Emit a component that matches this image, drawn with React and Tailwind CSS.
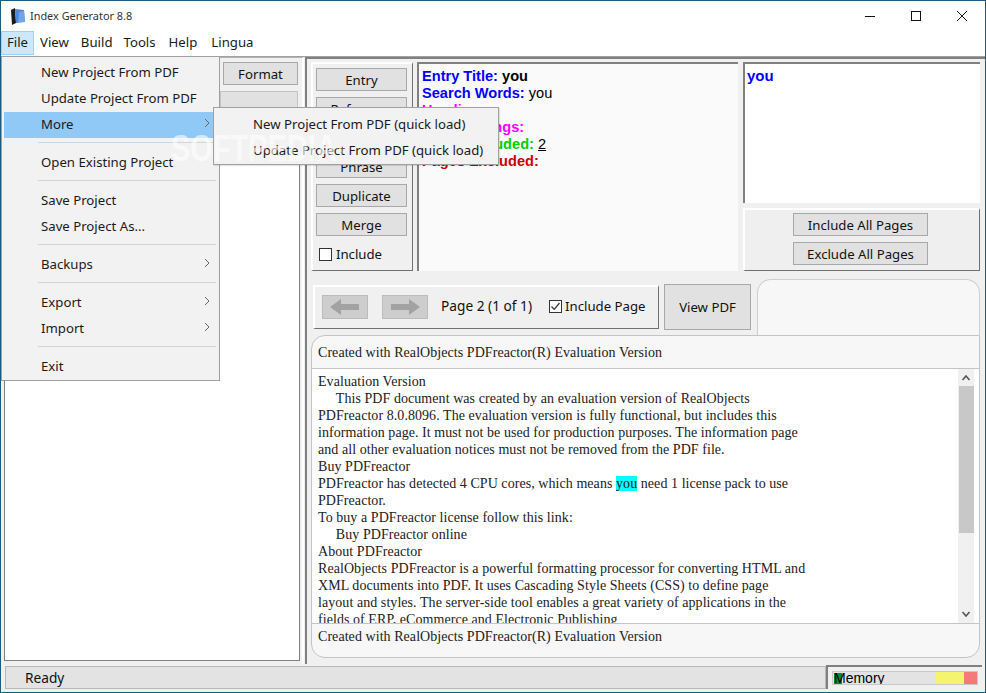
import React from "react";

const ui = "font-['Noto_Sans','Open_Sans',sans-serif]";

function Btn({ children, className = "" }) {
  return (
    <div className={`flex items-center justify-center border border-[#a8a8a8] bg-[#e1e1e1] pt-[2px] text-[13.2px] text-[#111] ${className}`}>
      {children}
    </div>
  );
}

function Arrow({ flip }) {
  return (
    <div className="flex h-[24px] w-[46px] items-center justify-center border border-[#bcbcbc] bg-[#cdcdcd]">
      <svg width="32" height="18" viewBox="0 0 32 18" className={flip ? "-scale-x-100" : ""}>
        <path d="M1 9 L12 1 L12 6 L30 6 L30 12 L12 12 L12 17 Z" fill="#a2a2a2" />
      </svg>
    </div>
  );
}

function Check({ checked }) {
  return (
    <span className="flex h-[13px] w-[13px] items-center justify-center border border-[#333] bg-white">
      {checked && (
        <svg width="11" height="11" viewBox="0 0 11 11">
          <path d="M1.5 5.5 L4.2 8.4 L9.5 2" fill="none" stroke="#333" strokeWidth="1.2" />
        </svg>
      )}
    </span>
  );
}

function Chevron() {
  return (
    <svg width="6" height="10" viewBox="0 0 6 10" className="absolute right-[4px] top-[6px]">
      <path d="M1 1 L5 5 L1 9" fill="none" stroke="#666" strokeWidth="1" />
    </svg>
  );
}

function Item({ label, sub, active }) {
  return (
    <div className={`relative ml-[2px] mr-[5px] flex h-[26px] items-center pl-[37px] text-[13.2px] text-[#1a1a1a] ${active ? "bg-[#90c8f6]" : ""}`}>
      {label}
      {sub && <Chevron />}
    </div>
  );
}

function Sep() {
  return <div className="mb-[7px] ml-[36px] mr-[3px] mt-[4px] h-[1px] bg-[#d4d4d4]" />;
}

const docLines = [
  "Evaluation Version",
  "\u00a0\u00a0\u00a0\u00a0\u00a0This PDF document was created by an evaluation version of RealObjects",
  "PDFreactor 8.0.8096. The evaluation version is fully functional, but includes this",
  "information page. It must not be used for production purposes. The information page",
  "and all other evaluation notices must not be removed from the PDF file.",
  "Buy PDFreactor",
  null,
  "PDFreactor.",
  "To buy a PDFreactor license follow this link:",
  "\u00a0\u00a0\u00a0\u00a0\u00a0Buy PDFreactor online",
  "About PDFreactor",
  "RealObjects PDFreactor is a powerful formatting processor for converting HTML and",
  "XML documents into PDF. It uses Cascading Style Sheets (CSS) to define page",
  "layout and styles. The server-side tool enables a great variety of applications in the",
  "fields of ERP, eCommerce and Electronic Publishing",
];

const raised = "border-b border-l-2 border-r border-t-2 border-b-[#707070] border-l-white border-r-[#707070] border-t-white";

export default function App() {
  return (
    <div className={`${ui} relative flex h-[693px] w-[986px] flex-col overflow-hidden border border-[#1b5b7d] bg-[#f0f0f0]`}>
      {/* title bar */}
      <div className="flex h-[30px] shrink-0 items-center bg-white">
        <svg width="14" height="17" viewBox="0 0 14 17" className="ml-[10px]">
          <path d="M0 2 L4 0 L5 15 L1 17 Z" fill="#1a1a1a" />
          <path d="M4 1 L13 2 L14 14 L5 15 Z" fill="#4f86d8" />
          <path d="M8 4 L13 3 L14 14 L7 14 Z" fill="#6fa5ea" />
        </svg>
        <span className="ml-[5px] text-[10.9px] text-[#333]">Index Generator 8.8</span>
        <div className="ml-auto flex items-center">
          <svg width="12" height="12" viewBox="0 0 12 12" className="mr-[34px]"><path d="M1 6.5 H11" stroke="#111" strokeWidth="1" /></svg>
          <svg width="12" height="12" viewBox="0 0 12 12" className="mr-[34px]"><rect x="1.5" y="1.5" width="9" height="9" fill="none" stroke="#111" /></svg>
          <svg width="12" height="12" viewBox="0 0 12 12" className="mr-[17px]"><path d="M1 1 L11 11 M11 1 L1 11" stroke="#111" strokeWidth="1" /></svg>
        </div>
      </div>

      {/* menu bar */}
      <div className="flex h-[26px] shrink-0 items-stretch border-b border-[#a0a0a0] bg-white pb-[1px] text-[13.2px] text-[#1a1a1a]">
        <div className="flex w-[33px] items-center justify-center border border-[#99d1ff] bg-[#cce8ff]">File</div>
        <div className="ml-[6px] flex items-center">View</div>
        <div className="ml-[12px] flex items-center">Build</div>
        <div className="ml-[11px] flex items-center">Tools</div>
        <div className="ml-[13px] flex items-center">Help</div>
        <div className="ml-[14px] flex items-center">Lingua</div>
      </div>

      {/* main */}
      <div className="flex min-h-0 flex-1">
        {/* left column */}
        <div className="mr-[1px] flex w-[303px] shrink-0 flex-col border-r-2 border-t border-r-white border-t-[#b4b4b4] pb-[3px] pl-[3px] pr-[2px] pt-[4px]">
          <div className="flex justify-end pr-[2px]">
            <Btn className="h-[23px] w-[75px]">Format</Btn>
          </div>
          <div className="mt-[6px] flex justify-end pr-[2px]">
            <div className="h-[24px] w-[78px] border border-[#c4c4c4] bg-[#e1e1e1]" />
          </div>
          <div className="mt-[6px] min-h-0 flex-1 border border-[#808080] bg-white" />
        </div>

        {/* right column */}
        <div className="flex min-w-0 flex-1 flex-col border-l-2 border-t-2 border-[#808080] pl-[4px] pr-[5px] pt-[3px]">
          <div className="flex h-[209px] shrink-0">
            {/* entry buttons */}
            <div className={`flex w-[102px] shrink-0 flex-col gap-[6px] ${raised} px-[3px] pt-[4px]`}>
              <Btn className="h-[23px] w-[91px]">Entry</Btn>
              <Btn className="h-[23px] w-[91px]">Reference</Btn>
              <Btn className="h-[23px] w-[91px]">Topic</Btn>
              <Btn className="h-[23px] w-[91px]">Phrase</Btn>
              <Btn className="h-[23px] w-[91px]">Duplicate</Btn>
              <Btn className="h-[23px] w-[91px]">Merge</Btn>
              <label className="mt-[3px] flex items-center gap-[4px] pl-[3px] text-[13.2px] text-[#111]">
                <Check />
                Include
              </label>
            </div>

            {/* rich text */}
            <div className="ml-[4px] w-[321px] shrink-0 border-l-2 border-t-2 border-[#808080] bg-[#fafafa] pl-[3px] pt-[4px] font-['Liberation_Sans',sans-serif] text-[14.6px] font-bold leading-[17px]">
              <div className="text-[#0000ff]">Entry Title: <span className="text-black">you</span></div>
              <div className="text-[#0000ff]">Search Words: <span className="font-normal text-black">you</span></div>
              <div className="text-[#ff00ff]">Headings:</div>
              <div className="text-[#ff00ff]">Sub Headings:</div>
              <div className="text-[#00d000]">Pages Included: <span className="font-normal text-black underline">2</span></div>
              <div className="text-[#cc0000]">Pages Excluded:</div>
            </div>

            {/* right pane */}
            <div className="ml-[5px] flex min-w-0 flex-1 flex-col">
              <div className="h-[141px] shrink-0 border-l-2 border-t-2 border-[#808080] bg-white pl-[2px] pt-[3px] font-['Liberation_Sans',sans-serif] text-[15px] font-bold leading-[17px] text-[#0000ff]">
                you
              </div>
              <div className={`mt-[5px] flex flex-1 flex-col items-center gap-[6px] ${raised} bg-[#efefef] pr-[3px] pt-[3px]`}>
                <Btn className="h-[23px] w-[135px]">Include All Pages</Btn>
                <Btn className="h-[23px] w-[135px]">Exclude All Pages</Btn>
              </div>
            </div>
          </div>

          {/* nav row */}
          <div className="mt-[8px] flex h-[56px] shrink-0 items-end">
            <div className={`mb-[6px] ml-[2px] flex h-[44px] w-[346px] shrink-0 items-center ${raised} pb-[2px] pl-[7px] text-[13.2px] text-[#111]`}>
              <Arrow />
              <div className="ml-[14px]"><Arrow flip /></div>
              <span className="ml-[13px] whitespace-nowrap text-[13.7px]">Page 2 (1 of 1)</span>
              <span className="ml-[17px] mr-[3px]"><Check checked /></span>
              <span className="whitespace-nowrap">Include Page</span>
            </div>
            <Btn className="mb-[5px] ml-[5px] h-[46px] w-[87px] shrink-0 !pt-[1px]">View PDF</Btn>
            <div className="ml-[6px] h-[56px] flex-1 rounded-t-[14px] border-l border-r border-t border-[#cfcfcf] bg-[#f7f7f7]" />
          </div>

          {/* doc panel */}
          <div className="mb-[6px] flex min-h-0 flex-1 flex-col overflow-hidden rounded-b-[14px] rounded-tl-[14px] border border-[#c4c4c4] bg-[#f7f7f7] font-['Liberation_Serif',serif] text-[14px] tracking-[0.06px] text-[#222]">
            <div className="flex h-[33px] shrink-0 items-center border-b border-[#c4c4c4] pl-[6px]">
              Created with RealObjects PDFreactor(R) Evaluation Version
            </div>
            <div className="flex h-[255px] shrink-0 overflow-hidden border-b border-[#c4c4c4] bg-white">
              <div className="flex-1 overflow-hidden pl-[6px] pt-[4px] leading-[17px]">
                {docLines.map((line, i) => (
                  <div key={i} className="whitespace-nowrap">
                    {line === null ? (
                      <>PDFreactor has detected 4 CPU cores, which means <span className="bg-[#00ffff]">you</span> need 1 license pack to use</>
                    ) : line}
                  </div>
                ))}
              </div>
              <div className="mr-[5px] flex w-[16px] shrink-0 flex-col items-center bg-[#f0f0f0]">
                <svg width="10" height="17" viewBox="0 0 10 17"><path d="M1.5 11 L5 7 L8.5 11" fill="none" stroke="#555" strokeWidth="1.6" /></svg>
                <div className="h-[147px] w-[15px] bg-[#c8c8c8]" />
                <div className="flex-1" />
                <svg width="10" height="17" viewBox="0 0 10 17"><path d="M1.5 6 L5 10 L8.5 6" fill="none" stroke="#555" strokeWidth="1.6" /></svg>
              </div>
            </div>
            <div className="flex h-[24px] shrink-0 items-center pl-[6px]">
              Created with RealObjects PDFreactor(R) Evaluation Version
            </div>
          </div>
        </div>
      </div>

      {/* status bar */}
      <div className="flex h-[28px] shrink-0 pb-[3px] pl-[4px] pr-[3px] text-[13.7px]">
        <div className="mt-[2px] flex w-[821px] shrink-0 items-center border border-[#b8b8b8] bg-[#e3e3e3] pl-[19px] pt-[1px] text-[#111]">Ready</div>
        <div className="mt-[1px] flex flex-1 items-center border-l-2 border-t-2 border-[#808080] pl-[4px]">
          <div className="relative flex h-[14px] w-[146px] overflow-hidden border border-[#c8c8c8] bg-[#e3e3e3]">
            <div className="w-[103px] shrink-0" />
            <div className="w-[28px] shrink-0 bg-[#f4f46e]" />
            <div className="flex-1 bg-[#f47a7a]" />
            <div className="absolute left-[1px] top-[1px] h-[11px] w-[8px] bg-[#0b8a2b]" />
            <span className="absolute left-[1px] top-[-2px] font-['Liberation_Sans',sans-serif] text-[14px] leading-[17px] text-black">Memory</span>
          </div>
        </div>
      </div>

      {/* File menu */}
      <div className="absolute left-[0px] top-[55px] w-[219px] border border-[#a0a0a0] bg-[#f2f2f2] pt-[3px]">
        <Item label="New Project From PDF" />
        <Item label="Update Project From PDF" />
        <Item label="More" sub active />
        <Sep />
        <Item label="Open Existing Project" />
        <Sep />
        <Item label="Save Project" />
        <Item label="Save Project As..." />
        <Sep />
        <Item label="Backups" sub />
        <Sep />
        <Item label="Export" sub />
        <Item label="Import" sub />
        <Sep />
        <Item label="Exit" />
      </div>

      {/* sub menu */}
      <div className="absolute left-[212px] top-[106px] w-[286px] border border-[#a0a0a0] bg-[#f2f2f2] pt-[4px] shadow-[1px_1px_1px_rgba(0,0,0,0.1)]">
        <div className="flex h-[26px] items-center whitespace-nowrap pl-[39px] text-[13.2px] text-[#1a1a1a]">New Project From PDF (quick load)</div>
        <div className="flex h-[26px] items-center whitespace-nowrap pl-[39px] text-[13.2px] text-[#1a1a1a]">Update Project From PDF (quick load)</div>
      </div>

      {/* watermark */}
      <div className="pointer-events-none absolute left-[170px] top-[130px] origin-left scale-y-[1.25] font-['Liberation_Sans',sans-serif] text-[29px] font-bold leading-[34px] text-white opacity-60">SOFTPEDIA<sup className="text-[10px]">®</sup></div>
    </div>
  );
}
